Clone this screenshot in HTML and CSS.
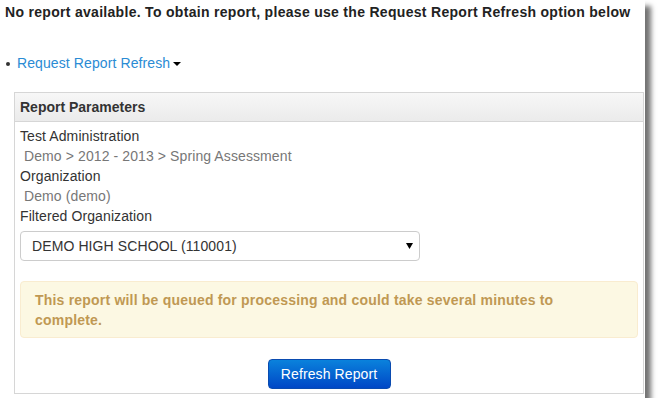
FILE: index.html
```html
<!DOCTYPE html>
<html>
<head>
<meta charset="utf-8">
<link rel="stylesheet" href="styles.css">
</head>
<body>
<div class="shot">
  <h1 class="notice">No report available. To obtain report, please use the Request Report Refresh option below</h1>
  <div class="menu-item">
    <span class="bullet"></span>
    <a class="menu-link" href="#">Request Report Refresh</a>
    <span class="caret"></span>
  </div>
  <div class="panel">
    <div class="panel-heading">Report Parameters</div>
    <div class="panel-body">
      <div class="label">Test Administration</div>
      <div class="value">Demo &gt; 2012 - 2013 &gt; Spring Assessment</div>
      <div class="label">Organization</div>
      <div class="value">Demo (demo)</div>
      <div class="label">Filtered Organization</div>
      <div class="select">
        <span class="select-text">DEMO HIGH SCHOOL (110001)</span>
        <svg class="select-arrow" width="7" height="6" viewBox="0 0 7 6"><path d="M0 0H7L3.5 6Z" fill="#000"/></svg>
      </div>
      <div class="alert">This report will be queued for processing and could take several minutes to complete.</div>
      <div class="actions">
        <button class="btn-primary">Refresh Report</button>
      </div>
    </div>
  </div>
</div>
</body>
</html>
```

FILE: styles.css
```css
html, body {
  margin: 0;
  padding: 0;
  background: #fff;
}
body {
  font-family: "Liberation Sans", Arial, sans-serif;
  font-size: 14px;
  line-height: 20px;
  color: #333;
}
.shot {
  width: 645px;
  height: 398px;
  background: #fff;
  box-shadow: 6px 6px 5px rgba(0, 0, 0, 0.55);
  box-sizing: border-box;
  padding-top: 2px;
}
.notice {
  margin: 0 0 0 5px;
  font-size: 14px;
  line-height: 20px;
  font-weight: bold;
  color: #222;
  letter-spacing: 0.3px;
}
.menu-item {
  display: flex;
  align-items: center;
  margin-top: 31px;
  height: 20px;
  padding-left: 6px;
}
.bullet {
  width: 4px;
  height: 4px;
  border-radius: 50%;
  background: #333;
  margin-right: 7px;
  margin-top: 2px;
}
.menu-link {
  color: #2a8bd4;
  text-decoration: none;
  letter-spacing: 0.1px;
}
.caret {
  width: 0;
  height: 0;
  margin-left: 3px;
  margin-top: 1px;
  border-left: 4px solid transparent;
  border-right: 4px solid transparent;
  border-top: 4px solid #000;
}
.panel {
  margin: 19px 0 0 14px;
  width: 630px;
  height: 302px;
  box-sizing: border-box;
  border: 1px solid #d6d6d6;
}
.panel-heading {
  height: 29px;
  box-sizing: border-box;
  padding: 4px 5px;
  font-weight: bold;
  color: #333;
  background: linear-gradient(to bottom, #f7f7f7, #ebebeb);
  border-bottom: 1px solid #d6d6d6;
}
.panel-body {
  padding: 4px 5px 5px 5px;
  letter-spacing: 0.1px;
}
.value {
  color: #777;
  padding-left: 4px;
}
.select {
  margin-top: 5px;
  width: 400px;
  height: 30px;
  box-sizing: border-box;
  border: 1px solid #ccc;
  border-radius: 4px;
  display: flex;
  align-items: center;
  justify-content: space-between;
  padding: 0 6px 0 11px;
  color: #333;
}
.select-arrow {
  display: block;
}
.alert {
  margin-top: 20px;
  padding: 8px 35px 7px 14px;
  background: #fcf8e3;
  border: 1px solid #f9ecd0;
  border-radius: 4px;
  color: #c09853;
  font-weight: bold;
  letter-spacing: 0.2px;
}
.actions {
  display: flex;
  justify-content: center;
  margin-top: 21px;
}
.btn-primary {
  font-family: "Liberation Sans", Arial, sans-serif;
  font-size: 14px;
  line-height: 20px;
  height: 30px;
  width: 123px;
  padding: 4px 0;
  color: #fff;
  background: linear-gradient(to bottom, #0a82dc, #0047c6);
  border: 1px solid #0a4bb0;
  border-radius: 4px;
  letter-spacing: 0.1px;
}
```
